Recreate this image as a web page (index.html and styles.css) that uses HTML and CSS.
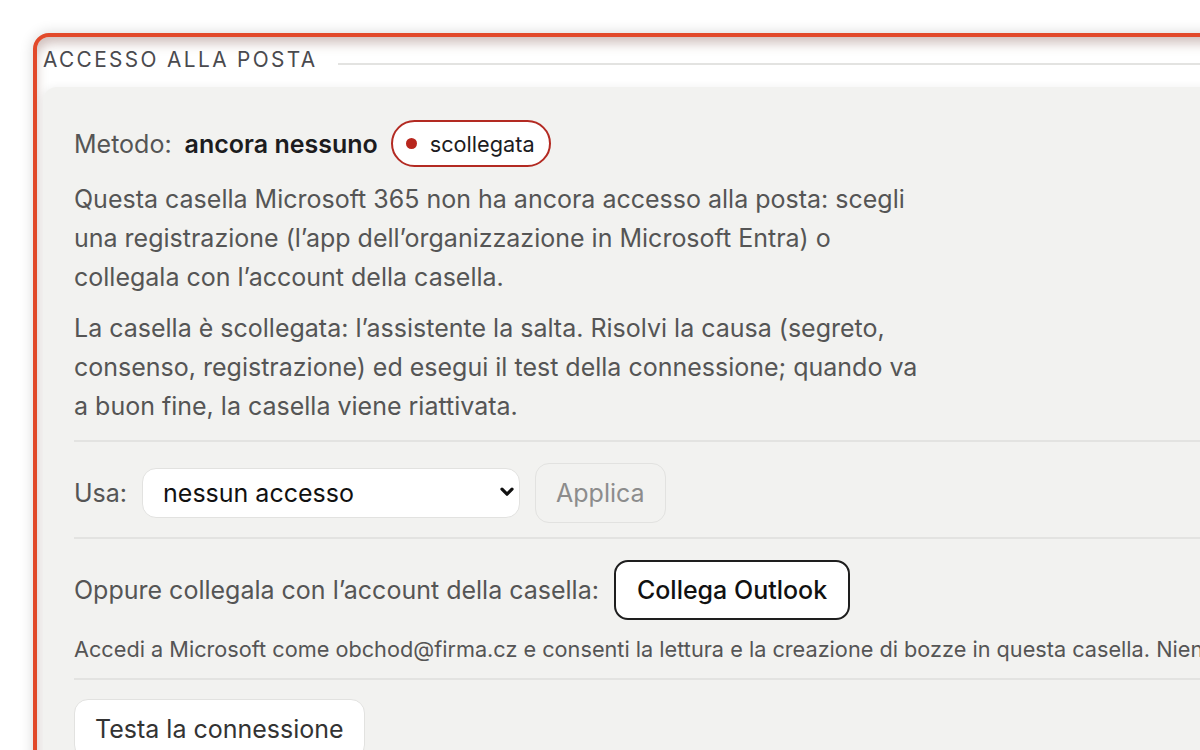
FILE: index.html
```html
<!DOCTYPE html>
<html lang="it">
<head>
    <meta charset="UTF-8">
    <meta name="viewport" content="width=device-width, initial-scale=1.0">
    <title>Accesso alla posta</title>
    <link rel="stylesheet" href="styles.css">
</head>
<body>

    <!-- Mail access section (highlighted) -->
    <section class="frame">
        <div class="legend">
            <span class="legend-text">Accesso alla posta</span>
            <span class="legend-line"></span>
        </div>

        <div class="panel">
            <div class="method">
                <span class="method-label">Metodo:</span>
                <strong class="method-value">ancora nessuno</strong>
                <span class="badge"><span class="dot"></span>scollegata</span>
            </div>

            <p class="text">Questa casella Microsoft 365 non ha ancora accesso alla posta: scegli una registrazione (l’app dell’organizzazione in Microsoft Entra) o collegala con l’account della casella.</p>
            <p class="text">La casella è scollegata: l’assistente la salta. Risolvi la causa (segreto, consenso, registrazione) ed esegui il test della connessione; quando va a buon fine, la casella viene riattivata.</p>

            <div class="row">
                <label class="row-label" for="use">Usa:</label>
                <div class="select-wrap">
                    <select class="select" id="use">
                        <option>nessun accesso</option>
                    </select>
                    <svg class="chevron" width="14" height="10" viewBox="0 0 14 10">
                        <path d="M2 2.2 L7 7.2 L12 2.2" fill="none" stroke="#111" stroke-width="3.2" stroke-linecap="round" stroke-linejoin="round"/>
                    </svg>
                </div>
                <button class="btn btn-disabled" disabled>Applica</button>
            </div>

            <div class="row">
                <span class="row-label">Oppure collegala con l’account della casella:</span>
                <button class="btn btn-strong">Collega Outlook</button>
            </div>
            <p class="hint">Accedi a Microsoft come obchod@firma.cz e consenti la lettura e la creazione di bozze in questa casella. Niente viene inviato senza conferma.</p>

            <div class="row row-last">
                <button class="btn">Testa la connessione</button>
            </div>
        </div>
    </section>

</body>
</html>
```

FILE: styles.css
```css
/* Page */
body {
    margin: 0;
    background: #fff;
    font-family: Inter, "Noto Sans", sans-serif;
    color: #555;
    overflow: hidden;
    height: 750px;
}

/* Highlighted frame */
.frame {
    width: 1300px;
    height: 800px;
    margin: 33px 0 0 33px;
    padding: 3px 0 0 6px;
    border: 4px solid #e2492a;
    border-radius: 16px 16px 0 0;
    background: #fff;
    box-shadow: 0 0 14px rgba(0, 0, 0, 0.16), inset 3px 10px 12px -4px rgba(130, 85, 75, 0.38);
    box-sizing: border-box;
}

/* Legend */
.legend {
    display: flex;
    align-items: center;
    height: 38px;
}

.legend-text {
    font-size: 20.8px;
    letter-spacing: 0.115em;
    text-transform: uppercase;
    color: #4a4a4e;
    padding-right: 20px;
}

.legend-line {
    flex: 1;
    height: 2px;
    margin-top: 9px;
    background: #e3e3e1;
}

/* Panel */
.panel {
    margin-top: 9px;
    padding: 33px 31px 0;
    background: #f2f2f0;
    border-radius: 14px 0 0 0;
    box-shadow: -2px 0 8px rgba(0, 0, 0, 0.06);
    height: 700px;
}

/* Method line */
.method {
    display: flex;
    align-items: center;
    gap: 13px;
    font-size: 25px;
}

.method-value {
    font-weight: 600;
    color: #1c1c1e;
}

.badge {
    display: inline-flex;
    align-items: center;
    gap: 13px;
    height: 47px;
    padding: 0 14px 0 13px;
    background: #fff;
    border: 2px solid #b32a22;
    border-radius: 24px;
    font-size: 21.7px;
    color: #1c1c22;
    box-sizing: border-box;
}

.dot {
    width: 11px;
    height: 11px;
    border-radius: 50%;
    background: #b8261d;
}

/* Paragraphs */
.text {
    width: 855px;
    margin: 13px 0 0;
    font-size: 25px;
    line-height: 39px;
}

.text + .text {
    margin-top: 12px;
}

/* Rows */
.row {
    display: flex;
    align-items: center;
    gap: 15px;
    margin-top: 14px;
    padding-top: 21px;
    border-top: 2px solid #e3e3e1;
    font-size: 25px;
}

.row-last {
    padding-top: 19px;
}

.row-label {
    white-space: nowrap;
}

/* Select */
.select-wrap {
    position: relative;
}

.select {
    display: block;
    width: 378px;
    height: 50px;
    padding: 0 30px 0 20px;
    font-family: inherit;
    font-size: 25px;
    color: #111;
    background: #fff;
    border: 1px solid #e2e2e0;
    border-radius: 14px;
    appearance: none;
}

.chevron {
    position: absolute;
    right: 6px;
    top: 19px;
    pointer-events: none;
}

/* Buttons */
.btn {
    height: 60px;
    padding: 0 20px;
    font-family: inherit;
    font-size: 25px;
    color: #333;
    background: #fff;
    border: 1px solid #e2e2e0;
    border-radius: 14px;
}

.btn-disabled {
    background: transparent;
    color: #8c8c8c;
}

.btn-strong {
    padding: 0 21px;
    border: 2px solid #1e1e1e;
    font-weight: 500;
    color: #111;
}

/* Hint */
.hint {
    margin: 14px 0 0;
    font-size: 21.7px;
    line-height: 30px;
    white-space: nowrap;
}
```
